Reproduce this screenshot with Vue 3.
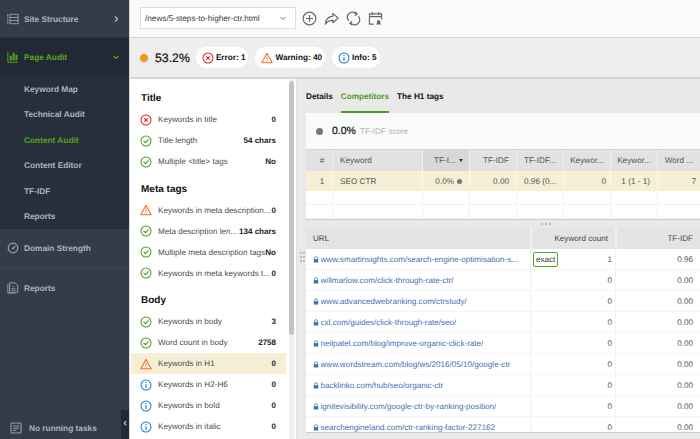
<template>
  <div class="app">
    <aside class="sidebar">
      <div class="nav-main site">
        <svg class="nav-icon" viewBox="0 0 14 14"><path d="M1 1.500v11" stroke="#9aa0aa" stroke-width="1.400" stroke-dasharray="2 1"/><path d="M3.500 1.500h9.500v11H3.500zM3.500 5.200h9.500M3.500 8.800h9.500" fill="none" stroke="#9aa0aa" stroke-width="1.100"/></svg>
        <span>Site Structure</span>
        <svg class="caret" viewBox="0 0 8 8"><path d="M3 1.500 5.500 4 3 6.500" fill="none" stroke="#b8bcc4" stroke-width="1.200"/></svg>
      </div>
      <div class="nav-main active">
        <svg class="nav-icon" viewBox="0 0 14 14"><path d="M1 1v12h12" fill="none" stroke="#4f9a1f" stroke-width="1.200"/><path d="M3 5.500h2.600V11H3zM6.400 2h2.600v9H6.400zM9.800 4.500h2.600V11H9.800z" fill="#4f9a1f"/></svg>
        <span>Page Audit</span>
        <svg class="caret" viewBox="0 0 8 8"><path d="M1.500 3 4 5.500 6.500 3" fill="none" stroke="#5aa51f" stroke-width="1.200"/></svg>
      </div>
      <div class="subnav">
        <div v-for="item in subItems" :key="item" class="sub-item" :class="{ current: item === 'Content Audit' }">{{ item }}</div>
      </div>
      <div class="nav-main plain">
        <svg class="nav-icon" viewBox="0 0 14 14"><circle cx="7" cy="7" r="5.600" fill="none" stroke="#9aa0aa" stroke-width="1.400"/><path d="M7 7.500 9.800 4.600" stroke="#9aa0aa" stroke-width="1.400"/><circle cx="7" cy="7.500" r="1.200" fill="#9aa0aa"/></svg>
        <span>Domain Strength</span>
      </div>
      <div class="nav-main plain last">
        <svg class="nav-icon" viewBox="0 0 14 14"><path d="M1 2.500v10.500h9" fill="none" stroke="#9aa0aa" stroke-width="1.100"/><path d="M3 1h6.500L12.500 4v8H3z" fill="none" stroke="#9aa0aa" stroke-width="1.100"/><path d="M5 9.800h5M5 7.800h5M6 5.200h2" stroke="#9aa0aa"/></svg>
        <span>Reports</span>
      </div>
      <div class="tasks">
        <svg class="task-icon" viewBox="0 0 12 12"><rect x="1" y="1" width="10" height="10" rx="1.200" fill="none" stroke="#9aa0aa" stroke-width="1.100"/><path d="M3 4h6M3 6.200h6M3 8.400h3.500" stroke="#9aa0aa"/></svg>
        <span>No running tasks</span>
        <div class="collapse">‹</div>
      </div>
    </aside>

    <main class="main">
      <div class="toolbar">
        <div class="url-select">
          <span>/news/5-steps-to-higher-ctr.html</span>
          <svg class="select-caret" viewBox="0 0 8 8"><path d="M1.500 3 4 5.500 6.500 3" fill="none" stroke="#777" stroke-width="1"/></svg>
        </div>
        <svg class="tool" viewBox="0 0 16 16"><circle cx="8" cy="8" r="6.800" fill="none" stroke="#666" stroke-width="1.200"/><path d="M8 4.200v7.600M4.200 8h7.600" stroke="#666" stroke-width="1.200"/></svg>
        <svg class="tool" viewBox="0 0 16 16"><path d="M9.500 2.500 15 7.500l-5.500 5V10C6 10 3.500 11 1.500 14c.3-4.500 3-8 8-8.500z" fill="none" stroke="#666" stroke-width="1.200" stroke-linejoin="round"/></svg>
        <svg class="tool" viewBox="0 0 16 16"><path d="M2.800 10.500A5.500 5.500 0 0 1 11 3M13.200 5.500A5.500 5.500 0 0 1 5 13" fill="none" stroke="#666" stroke-width="1.300"/><path d="M9.500 1 12 3 9.500 5M6.500 11 4 13l2.500 2" fill="none" stroke="#666" stroke-width="1.200"/></svg>
        <svg class="tool" viewBox="0 0 16 16"><path d="M6 14H1.500V3h13v6M1.500 6h13M4.500 1v3.500M11.500 1v3.500" fill="none" stroke="#666" stroke-width="1.200"/><path d="M8.500 14.500c1-.8 1-1.500 1-3a1.800 1.800 0 0 1 3.600 0c0 1.500 0 2.200 1 3z" fill="#666"/></svg>
      </div>

      <div class="status">
        <span class="score-dot"></span>
        <span class="score">53.2%</span>
        <span class="pill"><StatusIcon kind="error" /><b>Error: 1</b></span>
        <span class="pill"><StatusIcon kind="warn" /><b>Warning: 40</b></span>
        <span class="pill"><StatusIcon kind="info" /><b>Info: 5</b></span>
      </div>

      <div class="content">
        <section class="checks">
          <div class="checks-list">
            <template v-for="group in groups" :key="group.title">
              <h3>{{ group.title }}</h3>
              <div v-for="row in group.rows" :key="row.label" class="check" :class="{ selected: row.selected }">
                <StatusIcon :kind="row.kind" />
                <span class="check-label">{{ row.label }}</span>
                <b>{{ row.value }}</b>
              </div>
            </template>
          </div>
          <div class="scrollbar"><div class="thumb"></div></div>
        </section>

        <section class="details">
          <div class="tabs">
            <span>Details</span>
            <span class="tab-active">Competitors</span>
            <span>The H1 tags</span>
          </div>
          <div class="score-panel">
            <span class="grey-dot"></span>
            <b>0.0%</b>
            <span class="score-note">TF-IDF score</span>
          </div>
          <div class="grid kw-grid kw-head">
            <div class="num">#</div>
            <div>Keyword</div>
            <div class="sorted">TF-I... <i class="sort"></i></div>
            <div class="right">TF-IDF</div>
            <div class="middle">TF-IDF...</div>
            <div class="middle">Keywor...</div>
            <div class="middle">Keywor...</div>
            <div class="middle">Word ...</div>
          </div>
          <div class="grid kw-grid kw-row">
            <div class="num">1</div>
            <div>SEO CTR</div>
            <div class="right">0.0% <i class="small-dot"></i></div>
            <div class="right">0.00</div>
            <div>0.96 (0...</div>
            <div class="right tight">0</div>
            <div class="right">1 (1 - 1)</div>
            <div class="right tight">7</div>
          </div>
          <div v-for="n in 2" :key="n" class="grid kw-grid kw-empty">
            <div v-for="c in 8" :key="c"></div>
          </div>
          <div class="splitter"><i></i><i></i><i></i></div>
          <div class="url-table">
            <div class="grid url-grid url-head">
              <div>URL</div>
              <div class="right">Keyword count</div>
              <div class="right">TF-IDF</div>
            </div>
            <div v-for="(u, i) in urls" :key="u" class="grid url-grid url-row">
              <div class="url-cell">
                <svg class="lock" viewBox="0 0 8 9"><path d="M2 4V2.800a2 2 0 0 1 4 0V4" fill="none" stroke="#3f6fb5"/><rect x="1" y="4" width="6" height="4.500" fill="#3f6fb5"/></svg>
                <span class="url-text">{{ u }}</span>
              </div>
              <div class="count-cell">
                <span v-if="i === 0" class="exact">exact</span>
                <span class="count">{{ i === 0 ? 1 : 0 }}</span>
              </div>
              <div class="right">{{ i === 0 ? '0.96' : '0.00' }}</div>
            </div>
          </div>
          <div class="row-handle"><i v-for="n in 6" :key="n"></i></div>
        </section>
      </div>
    </main>
  </div>
</template>

<script setup>
import { h } from 'vue'

// small round status marks used in the pills and the check list
const StatusIcon = (props) => {
  const colors = { error: '#e2231a', ok: '#4f9a1f', warn: '#f26b21', info: '#1a7fd6' }
  const c = colors[props.kind]
  let parts
  if (props.kind === 'warn') {
    parts = [
      h('path', { d: 'M7 1.500 13 12.500H1z', fill: 'none', stroke: c, 'stroke-width': 1.200, 'stroke-linejoin': 'round' }),
      h('path', { d: 'M7 5.500v3.500M7 10v1.200', stroke: c, 'stroke-width': 1.100 })
    ]
  } else {
    const inner = {
      error: h('path', { d: 'M5 5l4 4M9 5l-4 4', stroke: c, 'stroke-width': 1.300 }),
      ok: h('path', { d: 'M4.200 6.800 6.400 9 10 5.200', fill: 'none', stroke: c, 'stroke-width': 1.200 }),
      info: h('path', { d: 'M7 3.500v1.300M7 6v4.500', stroke: c, 'stroke-width': 1.400 })
    }[props.kind]
    parts = [h('circle', { cx: 7, cy: 7, r: 5.800, fill: 'none', stroke: c, 'stroke-width': 1.200 }), inner]
  }
  return h('svg', { class: 'status-icon', viewBox: '0 0 14 14' }, parts)
}
StatusIcon.props = ['kind']

const subItems = ['Keyword Map', 'Technical Audit', 'Content Audit', 'Content Editor', 'TF-IDF', 'Reports']

const groups = [
  {
    title: 'Title',
    rows: [
      { kind: 'error', label: 'Keywords in title', value: '0' },
      { kind: 'ok', label: 'Title length', value: '54 chars' },
      { kind: 'ok', label: 'Multiple <title> tags', value: 'No' }
    ]
  },
  {
    title: 'Meta tags',
    rows: [
      { kind: 'warn', label: 'Keywords in meta description...', value: '0' },
      { kind: 'ok', label: 'Meta description len...', value: '134 chars' },
      { kind: 'ok', label: 'Multiple meta description tags', value: 'No' },
      { kind: 'ok', label: 'Keywords in meta keywords t...', value: '0' }
    ]
  },
  {
    title: 'Body',
    rows: [
      { kind: 'ok', label: 'Keywords in body', value: '3' },
      { kind: 'ok', label: 'Word count in body', value: '2758' },
      { kind: 'warn', label: 'Keywords in H1', value: '0', selected: true },
      { kind: 'info', label: 'Keywords in H2-H6', value: '0' },
      { kind: 'info', label: 'Keywords in bold', value: '0' },
      { kind: 'info', label: 'Keywords in italic', value: '0' }
    ]
  }
]

const urls = [
  'www.smartinsights.com/search-engine-optimisation-s...',
  'willmarlow.com/click-through-rate-ctr/',
  'www.advancedwebranking.com/ctrstudy/',
  'cxl.com/guides/click-through-rate/seo/',
  'neilpatel.com/blog/improve-organic-click-rate/',
  'www.wordstream.com/blog/ws/2016/05/10/google-ctr',
  'backlinko.com/hub/seo/organic-ctr',
  'ignitevisibility.com/google-ctr-by-ranking-position/',
  'searchengineland.com/ctr-ranking-factor-227162'
]
</script>

<style>
html, body {
  margin: 0;
  overflow: hidden;
}

.status-icon {
  width: 12px;
  height: 12px;
  flex: none;
}
</style>

<style scoped>
.app {
  display: flex;
  width: 700px;
  height: 439px;
  overflow: hidden;
  font-family: "Liberation Sans", Arial, sans-serif;
  font-size: 8.100px;
  text-rendering: geometricPrecision;
  color: #333;
  background: #fff;
}

.sidebar {
  width: 129px;
  flex: none;
  display: flex;
  flex-direction: column;
  background: #343b4a;
  position: relative;
  color: #b0b4bb;
  font-weight: bold;
  font-size: 8.300px;
}

.nav-main {
  height: 37px;
  display: flex;
  align-items: center;
  padding: 0 9px 0 7px;
  gap: 5px;
  box-sizing: border-box;
}

.nav-main span {
  flex: 1;
}

.site {
  height: 37px;
  border-bottom: 1px solid #2c3340;
  box-sizing: content-box;
}

.nav-main.active {
  background: #222935;
  color: #5aa51f;
}

.nav-main.plain {
  height: 39px;
  border-bottom: 1px solid #3f4655;
}

.nav-main.last {
  border-bottom: 0;
}

.nav-icon {
  width: 12px;
  height: 12px;
  flex: none;
}

.caret {
  width: 8px;
  height: 8px;
  flex: none;
}

.subnav {
  background: #272e3c;
  padding-top: 2px;
}

.sub-item {
  height: 25.400px;
  line-height: 25.400px;
  padding-left: 24px;
}

.sub-item.current {
  color: #5aa51f;
}

.tasks {
  margin-top: auto;
  height: 22px;
  display: flex;
  align-items: center;
  gap: 7px;
  padding-left: 10px;
}

.task-icon {
  width: 12px;
  height: 12px;
}

.collapse {
  position: absolute;
  right: 0;
  bottom: 0;
  width: 8px;
  height: 29px;
  background: #222935;
  color: #c8c8c8;
  line-height: 26px;
  text-align: center;
  font-size: 11px;
}

.main {
  flex: 1;
  min-width: 0;
  display: flex;
  flex-direction: column;
  border-left: 1px solid #d5d5d5;
}

.toolbar {
  height: 38px;
  flex: none;
  box-sizing: border-box;
  display: flex;
  align-items: center;
  gap: 7px;
  padding: 0 0 1px 10px;
  background: #fafafa;
  border-bottom: 1px solid #d2d2d2;
}

.url-select {
  width: 156px;
  height: 22px;
  box-sizing: border-box;
  border: 1px solid #ddd;
  background: #fff;
  display: flex;
  align-items: center;
  justify-content: space-between;
  padding: 0 8px 0 4px;
  margin-right: -1px;
  color: #3a3a4a;
  font-size: 8.200px;
}

.select-caret {
  width: 8px;
  height: 8px;
}

.tool {
  width: 15px;
  height: 15px;
}

.status {
  height: 41px;
  flex: none;
  box-sizing: border-box;
  display: flex;
  align-items: center;
  background: #eeeeee;
  border-bottom: 2px solid #d6d6d6;
  padding-left: 10px;
  color: #111;
}

.score-dot {
  width: 8px;
  height: 8px;
  border-radius: 50%;
  background: #f7941d;
  margin-right: 7px;
}

.score {
  font-size: 12.300px;
  margin-right: 6px;
  -webkit-text-stroke: .2px #111;
}

.pill {
  height: 21px;
  border-radius: 10px;
  background: #fff;
  display: flex;
  align-items: center;
  gap: 2px;
  padding: 0 3px 0 6px;
  margin-right: 7px;
  font-size: 8.200px;
}

.content {
  flex: 1;
  min-height: 0;
  display: flex;
}

.checks {
  width: 167px;
  flex: none;
  display: flex;
  background: #fff;
  box-sizing: border-box;
  border-right: 1px solid #e2e2e2;
}

.checks-list {
  width: 155px;
  flex: none;
  padding: 9px 0 0 1px;
}

h3 {
  margin: 6.500px 0 0;
  padding: 0 0 0 10px;
  color: #111;
  font-size: 10px;
  height: 21px;
  line-height: 21px;
}

h3:first-child {
  margin-top: 0;
}

.check {
  height: 21px;
  display: flex;
  align-items: center;
  padding: 0 10px 0 9px;
  color: #4a4a58;
}

.check .status-icon {
  margin-right: 6px;
}

.check.selected {
  background: #f6efd6;
}

.check-label {
  flex: 1;
  min-width: 0;
  white-space: nowrap;
}

.check b {
  color: #222;
  font-size: 8px;
}

.scrollbar {
  width: 5px;
  margin-left: 3px;
  background: #f0f0f0;
}

.thumb {
  height: 254px;
  margin: 2px 0 0;
  border-radius: 3px;
  background: #c2c2c2;
}

.details {
  flex: 1;
  min-width: 0;
  background: #e9e9e9;
  padding-left: 9px;
  position: relative;
}

.tabs {
  height: 34px;
  display: flex;
  gap: 8px;
  align-items: flex-end;
  color: #111;
  font-weight: bold;
  font-size: 8.200px;
  box-sizing: border-box;
}

.tabs span {
  height: 23px;
  line-height: 14px;
  box-sizing: border-box;
}

.tab-active {
  color: #4f9a1f;
  border-bottom: 2px solid #4f9a1f;
}

.score-panel {
  height: 36px;
  display: flex;
  align-items: center;
  background: #fafafa;
  padding-left: 10px;
  color: #111;
}

.grey-dot {
  width: 7px;
  height: 7px;
  border-radius: 50%;
  background: #777;
  margin-right: 9px;
}

.score-panel b {
  font-weight: normal;
  font-size: 10.500px;
  -webkit-text-stroke: .2px #111;
  margin-right: 4px;
}

.score-note {
  color: #b5b5b5;
  font-size: 8.200px;
}

.grid {
  display: grid;
}

.grid > div {
  padding: 0 7px;
  box-sizing: border-box;
  min-width: 0;
  white-space: nowrap;
  overflow: hidden;
  display: flex;
  align-items: center;
}

.kw-grid {
  grid-template-columns: 26px 90px repeat(5, 47px) 1fr;
  color: #555;
  font-size: 8.200px;
}

.kw-head {
  height: 22px;
  box-sizing: border-box;
  background: #e2e2e2;
  border-top: 1px solid #d5d5d5;
}

.kw-head > div + div {
  border-left: 1px solid #f0f0f0;
}

.kw-head .sorted {
  background: #d8d8d8;
  padding-left: 11px;
  gap: 3px;
}

.sort {
  border: 2.500px solid transparent;
  border-top: 3px solid #333;
  border-bottom: 0;
}

.kw-row {
  height: 20px;
  background: #f6efd6;
}

.kw-row > div + div {
  border-left: 1px solid #fbf8ec;
}

.kw-empty {
  height: 14px;
  box-sizing: border-box;
  background: #fff;
  border-bottom: 1px solid #f2f2f2;
}

.kw-empty > div + div {
  border-left: 1px solid #f2f2f2;
}

.grid > .num {
  justify-content: center;
  padding: 0 0 0 6px;
}

.grid > .middle {
  justify-content: center;
  padding: 0;
}

.grid > .right {
  justify-content: flex-end;
  gap: 3px;
}

.grid > .tight {
  padding-right: 4px;
}

.small-dot {
  width: 5px;
  height: 5px;
  border-radius: 50%;
  background: #777;
}

.splitter {
  height: 9px;
  display: flex;
  justify-content: center;
  align-items: center;
  gap: 2px;
  padding-left: 86px;
  border-top: 1px solid #cfcfcf;
  box-sizing: border-box;
}

.splitter i {
  width: 2px;
  height: 2px;
  background: #bdbdbd;
}

.url-table {
  background: #fff;
  height: 204px;
  overflow: hidden;
  border-bottom: 1px solid #ccc;
}

.url-grid {
  grid-template-columns: 224px 85px 1fr;
  color: #555;
}

.url-head {
  height: 21px;
  background: #e4e4e4;
  color: #444;
}

.url-head > div + div {
  border-left: 2px solid #f0f0f0;
}

.url-row {
  height: 21px;
  border-bottom: 1px solid #f5f5f5;
  box-sizing: border-box;
}

.url-row > div + div {
  border-left: 1px solid #f2f2f2;
}

.url-cell {
  gap: 1.500px;
  color: #3f6fb5;
}

.lock {
  width: 6px;
  height: 7px;
  flex: none;
}

.url-text {
  overflow: hidden;
}

.grid > .count-cell {
  padding-left: 2px;
  padding-right: 3px;
}

.count {
  margin-left: auto;
}

.exact {
  border: 1px solid #5aa51f;
  border-radius: 2px;
  padding: 1px 2px;
  color: #333;
  line-height: 11px;
}

.row-handle {
  position: absolute;
  left: 3px;
  top: 173px;
  display: grid;
  grid-template-columns: 2px 2px;
  gap: 2px 1px;
}

.row-handle i {
  width: 2px;
  height: 2px;
  background: #bdbdbd;
}
</style>
